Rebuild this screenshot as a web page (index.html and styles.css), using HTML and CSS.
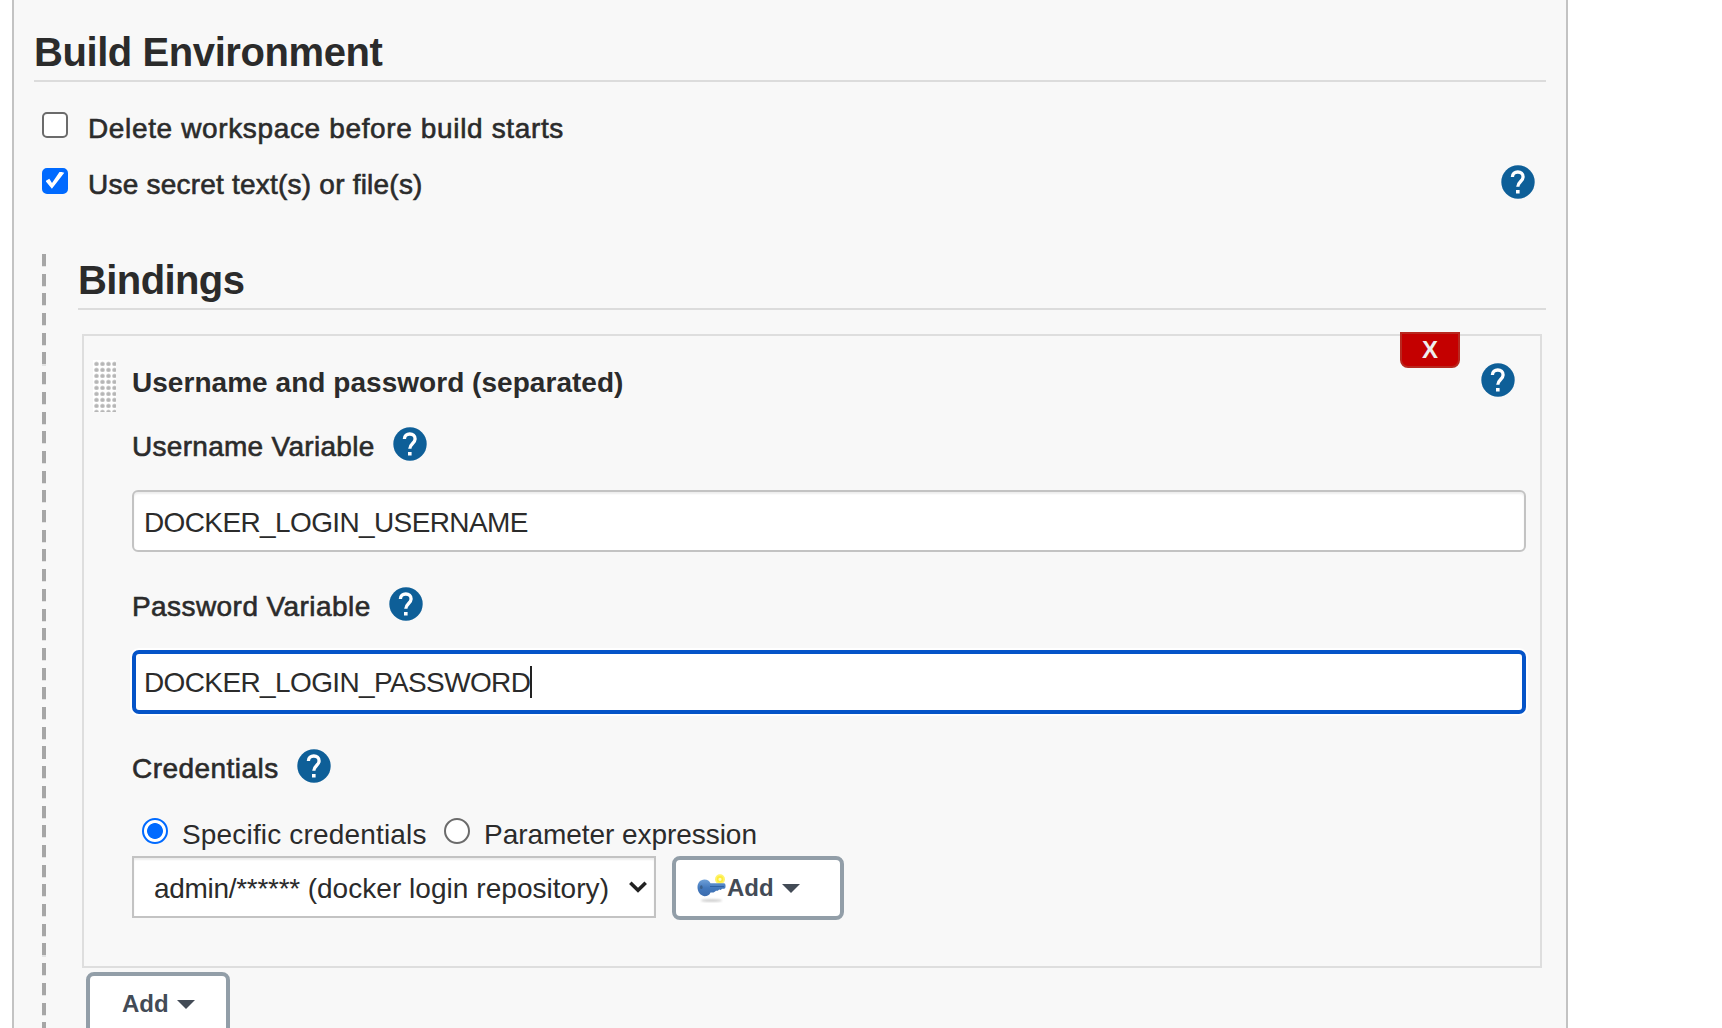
FILE: index.html
```html
<!DOCTYPE html>
<html lang="en">
<head>
<meta charset="utf-8">
<title>Build Environment</title>
<link rel="stylesheet" href="styles.css">
</head>
<body>
<svg class="defs" aria-hidden="true">
  <symbol id="help" viewBox="0 0 34 34">
    <circle cx="17" cy="17" r="16.700" fill="#0e5f98"/>
    <path d="M11.400 12C11.400 8.900 13.700 7 16.800 7s5.300 1.900 5.300 4.900c0 4.400-5.300 4.800-5.300 9.900" fill="none" stroke="#fff" stroke-width="3.300"/>
    <rect x="15" y="25" width="3.600" height="3.500" fill="#fff"/>
  </symbol>
</svg>
<main class="panel">
  <h1 class="title t-build">Build Environment</h1>
  <label class="check-row"><input type="checkbox" class="check"><span class="medium t-delete">Delete workspace before build starts</span></label>
  <div class="check-row">
    <label class="check-label"><input type="checkbox" class="check" checked><span class="medium t-secret">Use secret text(s) or file(s)</span></label>
    <svg class="help"><use href="#help"/></svg>
  </div>
  <section class="nested">
    <h2 class="title t-bind">Bindings</h2>
    <div class="binding">
      <button class="remove">X</button>
      <div class="binding-head">
        <span class="grip"></span>
        <b class="name">Username and password (separated)</b>
        <svg class="help"><use href="#help"/></svg>
      </div>
      <div class="fields">
        <div class="label-row user-row"><span class="medium t-uvar">Username Variable</span><svg class="help"><use href="#help"/></svg></div>
        <div class="field"><span class="value">DOCKER_LOGIN_USERNAME</span></div>
        <div class="label-row pass-row"><span class="medium t-pvar">Password Variable</span><svg class="help"><use href="#help"/></svg></div>
        <div class="field focused"><span class="value">DOCKER_LOGIN_PASSWORD</span><i class="caret"></i></div>
        <div class="label-row cred-row"><span class="medium t-cred">Credentials</span><svg class="help"><use href="#help"/></svg></div>
        <div class="radios">
          <label class="option option-a"><input type="radio" name="kind" class="radio" checked><span class="t-spec">Specific credentials</span></label>
          <label class="option"><input type="radio" name="kind" class="radio"><span class="t-param">Parameter expression</span></label>
        </div>
        <div class="picker">
          <div class="select"><span><span class="t-user">admin/******</span><span class="t-sel"> (docker login repository)</span></span>
            <svg class="chevron" viewBox="0 0 18 12"><path d="M1.300 1.700 9 9.200l7.700-7.500" fill="none" stroke="#222" stroke-width="3.600"/></svg>
          </div>
          <button class="add add-key">
            <svg class="key" viewBox="0 0 30 30">
              <defs><filter id="soft" x="-30%" y="-100%" width="160%" height="300%"><feGaussianBlur stdDeviation="1"/></filter>
              <linearGradient id="blue" x1="0" y1="0" x2="0" y2="1"><stop offset="0" stop-color="#6fa0d8"/><stop offset=".5" stop-color="#4379bd"/><stop offset="1" stop-color="#3c6cae"/></linearGradient></defs>
              <ellipse cx="14.500" cy="27.500" rx="10.500" ry="1" fill="#bbb" filter="url(#soft)"/>
              <circle cx="23" cy="6.300" r="5" fill="#fff36a"/><circle cx="23" cy="6.300" r="2.400" fill="#fffbc0" stroke="#fdec3a" stroke-width="1.600"/>
              <path d="M7.500 6.500c3 0 5 1.500 6 3.800h13.500q1.500 0 1.500 2v1.700q0 1.700-1.500 1.700h-2l-1.200 1.300-1.600-.500-1.400 1.300h-1.800l-1.200 1-1.300.800h-3c-1 2.600-3 3.700-6 3.700C3 22.500.500 18.500.500 14.300S3 6.500 7.500 6.500z" fill="url(#blue)"/>
              <ellipse cx="4.300" cy="14.200" rx="1.300" ry="1.900" fill="#3c618c"/>
              <path d="M13 13.500h14" stroke="#2f61a4" stroke-width="1"/>
            </svg><span>Add</span><i class="arrow"></i>
          </button>
        </div>
      </div>
    </div>
    <button class="add add-binding"><span>Add</span><i class="arrow"></i></button>
  </section>
</main>
</body>
</html>
```
FILE: styles.css
```css
* { box-sizing: border-box; }
html, body { height: 100%; }
body {
  margin: 0;
  overflow: hidden;
  background: #fff;
  color: #2b2b2b;
  font: 28px/32px "Liberation Sans", Arial, sans-serif;
  white-space: nowrap;
}
.defs { display: none; }
button { margin: 0; padding: 0; font-family: inherit; }
.help { display: block; flex: none; width: 34px; height: 34px; }

.panel {
  width: 1556px;
  height: 1028px;
  margin-left: 12px;
  padding: 22px 20px 0;
  overflow: hidden;
  background: #f8f8f8;
  border: solid #c3c3c3;
  border-width: 0 2px;
}
.title {
  height: 60px;
  margin: 0;
  border-bottom: 2px solid #dcdcdc;
  font-size: 40px;
  line-height: 61px;
  font-weight: bold;
}
.medium { -webkit-text-stroke: .6px #2b2b2b; }

/* tracking per text run */
.t-build { letter-spacing: -.42px; }
.t-delete { letter-spacing: .64px; }
.t-secret { letter-spacing: .22px; }
.t-bind { letter-spacing: -.6px; }
.name { letter-spacing: .04px; }
.t-uvar { letter-spacing: .29px; }
.t-pvar { letter-spacing: .43px; }
.t-cred { letter-spacing: .45px; }
.t-spec { letter-spacing: .17px; }
.t-param { letter-spacing: -.05px; }
.t-user { letter-spacing: -.3px; }
.t-sel { letter-spacing: .04px; }
.value { letter-spacing: -.62px; }

/* checkbox rows */
.check-row { display: flex; align-items: center; height: 56px; padding: 0 11px 0 8px; }
.title + .check-row { margin-top: 16px; }
.check-row .medium { padding-top: 5px; }
.check-label { display: flex; flex: 1; align-items: center; }
.check, .radio {
  appearance: none;
  flex: none;
  width: 26px;
  height: 26px;
  margin: 0;
  background: #fff;
  border: 2px solid #6b6b6b;
}
.check { margin: -3px 20px 0 0; border-radius: 5px; }
.check:checked {
  border-color: #006aff;
  background: #006aff;
  display: grid;
  place-items: center;
}
.check:checked::before {
  content: "";
  width: 19px;
  height: 18px;
  background: #fff;
  clip-path: polygon(0 9.500px, 3.800px 7.300px, 6.500px 11.500px, 14.300px 0, 18.800px 1.300px, 6.400px 17.300px);
}

/* nested section with dashed guide */
.nested {
  height: 774px;
  margin: 44px 0 0 8px;
  padding-left: 36px;
  background: repeating-linear-gradient(#a6a6a6 0 12px, #e2e2e2 12px 13px, transparent 13px 19.700px) 0 0 / 4px 100% no-repeat;
}
.nested .title { height: 56px; line-height: 52px; }
.binding {
  position: relative;
  height: 634px;
  margin: 24px 4px 0;
  border: 2px solid #dedede;
}
.remove {
  position: absolute;
  top: -4px;
  right: 80px;
  width: 60px;
  height: 36px;
  background: #c40000;
  border: 2px solid #b8281f;
  border-radius: 0 0 8px 8px;
  color: #eee;
  font-size: 24px;
  font-weight: bold;
  line-height: 32px;
}
.binding-head { display: flex; align-items: center; padding: 24px 25px 0 9px; height: 76px; }
.grip {
  width: 23px;
  height: 52px;
  margin-right: 16px;
  background: radial-gradient(circle at 3.500px 4px, #b5b5b5 0 1px, #d0d0d0 2px, #fff 2.800px) 0 0 / 6px 6px;
}
.name { flex: 1; margin-top: -7px; }
.binding-head .help { margin-top: -12px; }
.fields { padding: 0 14px 0 48px; }
.label-row { display: flex; align-items: center; gap: 18.500px; height: 34px; }
.label-row .medium { padding-top: 1px; }
.label-row .help { margin-top: -4px; }
.user-row { margin-top: 17px; }
.field {
  display: flex;
  align-items: center;
  height: 62px;
  padding: 3px 10px 0;
  background: #fff;
  border: 2px solid #c3c3c3;
  border-radius: 6px;
  box-shadow: inset 0 2px 2px #eee;
}
.user-row + .field { margin-top: 27px; }
.pass-row { margin-top: 37px; }
.focused {
  height: 64px;
  margin-top: 27px;
  padding: 0 8px;
  border: 4px solid #0554c8;
  border-radius: 7px;
  box-shadow: 0 0 0 2px #fff;
}
.focused .value { padding-top: 1px; }
.caret { width: 2px; height: 32px; background: #222; }
.cred-row { margin-top: 37px; }
.radios { display: flex; height: 56px; margin-top: 15px; padding: 19px 0 0 10px; }
.option { display: flex; align-items: center; height: 32px; }
.radio { margin: -9px 14px 0 0; border-radius: 50%; }
.radio:checked { border-color: #006aff; background: radial-gradient(circle, #006aff 0 7.500px, #fff 8.300px); }
.option-a { width: 302px; }
.picker { display: flex; gap: 16px; }
.select {
  display: flex;
  align-items: center;
  justify-content: space-between;
  width: 524px;
  height: 62px;
  padding: 4px 7px 0 20px;
  background: #fff;
  border: 2px solid #c3c3c3;
  box-shadow: inset 0 2px 2px #eee;
}
.chevron { width: 18px; height: 12px; margin-top: -4px; }
.add {
  display: flex;
  align-items: center;
  width: 144px;
  height: 64px;
  padding: 0 0 0 32px;
  background: #fff;
  border: 4px solid #929ea8;
  border-radius: 8px;
  color: #434b56;
  font-size: 24px;
  font-weight: bold;
  line-height: 32px;
}
.add-key { width: 172px; padding-left: 21px; }
.key { width: 30px; height: 30px; }
.arrow {
  margin-left: 8px;
  border: solid transparent;
  border-width: 9px 9px 0;
  border-top-color: #434b56;
}
.add-binding { margin: 4px 0 0 8px; }
```
